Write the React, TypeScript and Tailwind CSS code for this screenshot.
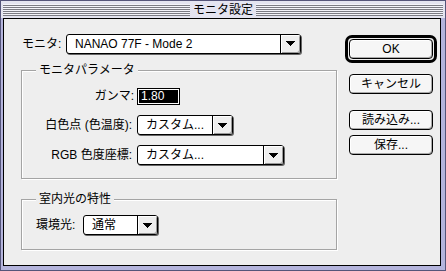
import React from 'react';

const stripes =
  'h-[12px] flex-1 bg-[repeating-linear-gradient(to_bottom,#f4f4fa_0px,#f4f4fa_1px,#7c7c84_1px,#7c7c84_2px)]';

const Arrow = () => (
  <svg width="9" height="5" viewBox="0 0 9 5" shapeRendering="crispEdges">
    <path d="M0 0h9v1h-1v1h-1v1h-1v1h-1v1h-1v-1h-1v-1h-1v-1h-1v-1h-1z" fill="#000" />
  </svg>
);

interface PopupProps {
  value: string;
  className: string;
}

const Popup: React.FC<PopupProps> = ({ value, className }) => (
  <div className={`flex h-[20px] rounded-[3px] border border-black bg-white shadow-[1px_1px_0_#666] ${className}`}>
    <span className="flex-1 pl-[8px] leading-[18px]">{value}</span>
    <span className="flex w-[20px] items-center justify-center rounded-r-[2px] border-l border-black bg-[#eeeeee] shadow-[inset_1px_1px_0_#fff,inset_-1px_-1px_0_#999]">
      <Arrow />
    </span>
  </div>
);

const Button: React.FC<{ label: string; className?: string }> = ({ label, className = '' }) => (
  <button className={`h-[20px] w-[84px] rounded-[4px] border border-black bg-[#f6f6f6] leading-[18px] shadow-[inset_1px_1px_0_#fff,inset_-1px_-1px_0_#aaa] ${className}`}>
    {label}
  </button>
);

const Group: React.FC<{ title: string; className: string; children: React.ReactNode }> = ({ title, className, children }) => (
  <div className={`relative w-[316px] border border-[#a4a4a4] shadow-[inset_1px_1px_0_#fff,1px_1px_0_#fff] ${className}`}>
    <span className="absolute -top-[8px] left-[14px] bg-[#eeeeee] px-[3px] leading-[14px]">{title}</span>
    {children}
  </div>
);

export default function App() {
  return (
    <div className="flex h-[271px] w-[446px] flex-col border border-[#55557a] bg-[#b4b4dc] font-['Liberation_Sans','Noto_Sans_CJK_JP',sans-serif] text-[12px] text-black">
      <div className="flex h-[17px] items-center bg-[#e4e4f0] px-[2px]">
        <div className={stripes} />
        <span className="px-[3px] leading-[14px]">モニタ設定</span>
        <div className={stripes} />
      </div>
      <div className="mb-[4px] ml-[2px] mr-[4px] flex flex-1 border border-black bg-[#eeeeee]">
        <div className="ml-[17px] flex w-[316px] flex-col">
          <div className="mt-[14px] flex h-[21px] items-center">
            <span className="w-[45px] pl-[1px]">モニタ:</span>
            <Popup value="NANAO 77F - Mode 2" className="w-[235px]" />
          </div>

          <Group title="モニタパラメータ" className="mt-[16px] h-[109px]">
            <div className="flex flex-col gap-[10px] pt-[16px]">
              <div className="flex items-center">
                <span className="w-[112px] text-right">ガンマ:</span>
                <div className="ml-[3px] h-[17px] w-[43px] border border-black bg-white p-[1px]">
                  <div className="h-full w-full bg-black pl-[2px] leading-[13px] text-white">1.80</div>
                </div>
              </div>
              <div className="flex items-center">
                <span className="w-[110px] text-right">白色点 (色温度):</span>
                <Popup value="カスタム..." className="ml-[5px] w-[96px]" />
              </div>
              <div className="flex items-center">
                <span className="w-[110px] text-right">RGB 色度座標:</span>
                <Popup value="カスタム..." className="ml-[5px] w-[147px]" />
              </div>
            </div>
          </Group>

          <Group title="室内光の特性" className="mt-[20px] h-[51px]">
            <div className="flex items-center pl-[14px] pt-[15px]">
              <span className="w-[47px]">環境光:</span>
              <Popup value="通常" className="w-[75px]" />
            </div>
          </Group>
        </div>

        <div className="ml-[8px] flex w-[92px] flex-col items-center">
          <div className="mt-[16px] rounded-[7px] border-[3px] border-black p-[1px]">
            <Button label="OK" className="w-[78px]" />
          </div>
          <Button label="キャンセル" className="mt-[11px]" />
          <Button label="読み込み..." className="mt-[16px]" />
          <Button label="保存..." className="mt-[5px]" />
        </div>
      </div>
    </div>
  );
}
